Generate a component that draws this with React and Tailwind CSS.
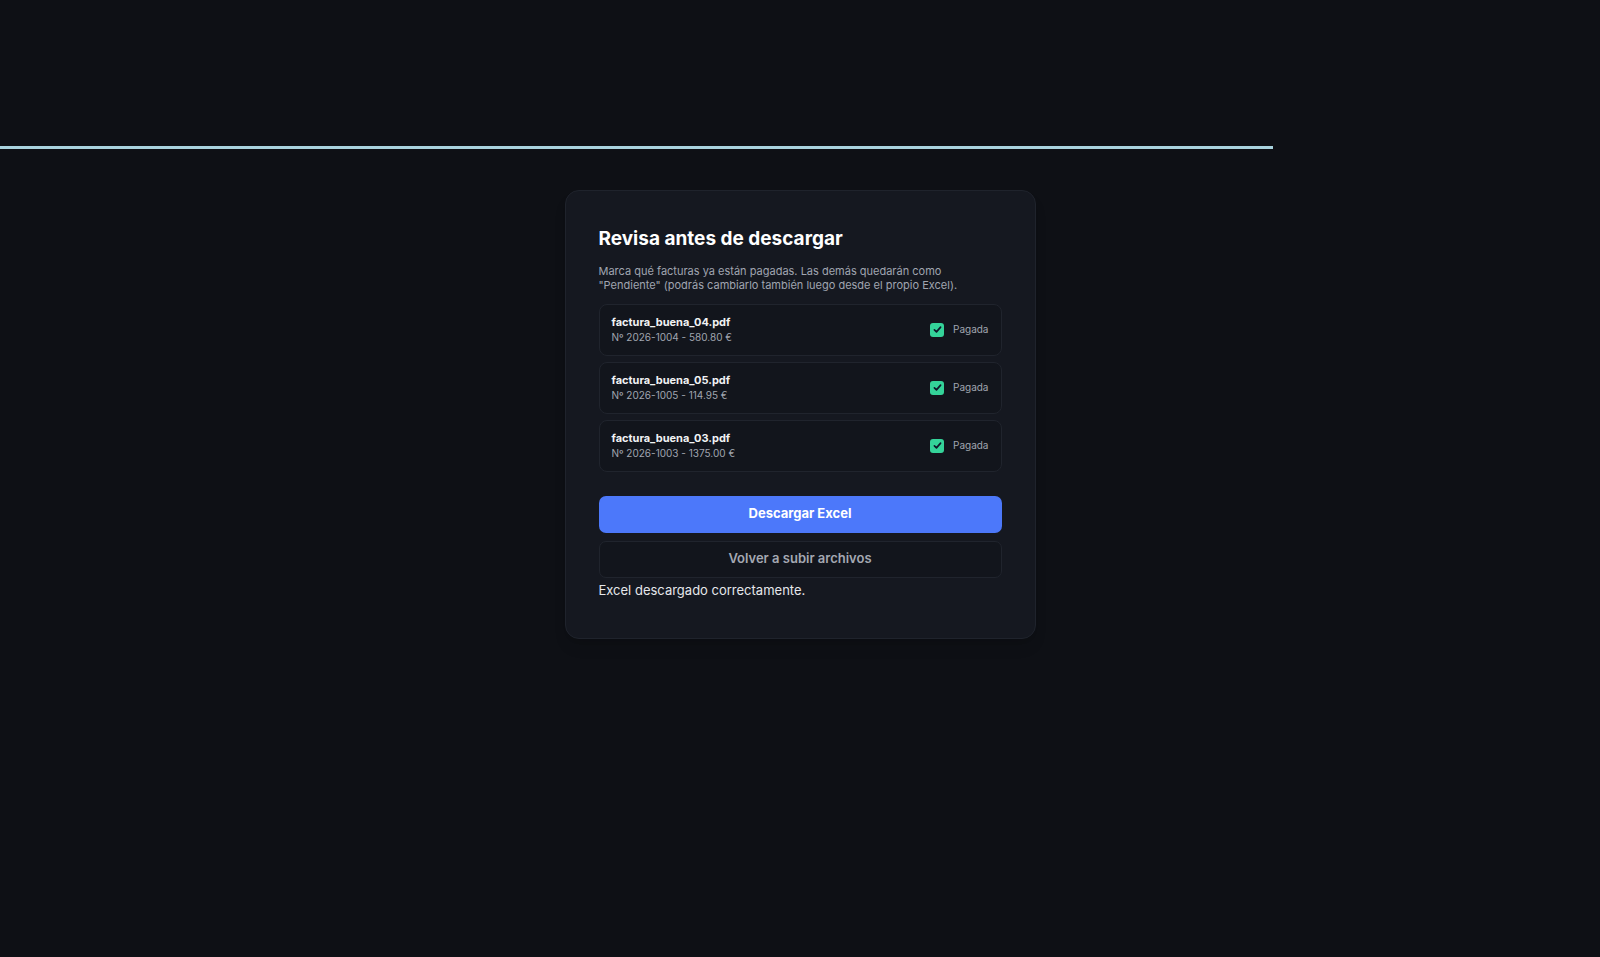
import React from 'react';

const invoices = [
  { name: 'factura_buena_04.pdf', meta: 'Nº 2026-1004 - 580.80 €' },
  { name: 'factura_buena_05.pdf', meta: 'Nº 2026-1005 - 114.95 €' },
  { name: 'factura_buena_03.pdf', meta: 'Nº 2026-1003 - 1375.00 €' },
];

function Check() {
  return (
    <span className="flex h-[14px] w-[14px] items-center justify-center rounded-[3px] bg-[#34d399]">
      <svg viewBox="0 0 16 16" className="h-[11px] w-[11px]" fill="none" stroke="#0f172a" strokeWidth="2.4" strokeLinecap="round" strokeLinejoin="round">
        <path d="M3.5 8.5l3 3 6-7" />
      </svg>
    </span>
  );
}

export default function App() {
  return (
    <div className="min-h-screen bg-[#0e1015] pt-[146px]" style={{ fontFamily: 'Inter, "Noto Sans", sans-serif' }}>
      <div className="h-[3px] w-[1273px] bg-[#a9d3de]" />
      <div className="mt-[41px] flex justify-center">
        <div className="w-[471px] rounded-[14px] border border-[#1f232c] bg-[#151820] px-[33px] pt-[34px] pb-[38px] shadow-lg">
          <h1 className="text-[19px] font-bold text-white">Revisa antes de descargar</h1>
          <p className="mt-[10px] text-[11px] leading-[14px] text-[#a0a5b0]">
            Marca qué facturas ya están pagadas. Las demás quedarán como "Pendiente" (podrás cambiarlo también luego desde el propio Excel).
          </p>
          <div className="mt-[12px] flex flex-col gap-[6px]">
            {invoices.map((inv) => (
              <div key={inv.name} className="flex h-[52px] items-center justify-between rounded-[8px] border border-[#20242d] bg-[#12151c] px-[12px]">
                <div>
                  <div className="text-[11px] font-bold leading-[15px] text-[#f1f2f4]">{inv.name}</div>
                  <div className="text-[10px] leading-[15px] text-[#a0a5b0]">{inv.meta}</div>
                </div>
                <label className="flex items-center gap-[9px] text-[10px] text-[#a0a5b0]">
                  <Check />
                  Pagada
                </label>
              </div>
            ))}
          </div>
          <button className="mt-[24px] h-[37px] w-full rounded-[7px] bg-[#4c78fa] text-[13px] font-bold text-white">Descargar Excel</button>
          <button className="mt-[8px] h-[37px] w-full rounded-[7px] border border-[#20242d] bg-[#12151c] text-[13px] font-semibold text-[#a4a8b2]">Volver a subir archivos</button>
          <p className="mt-[3px] text-[13px] text-[#e5e7eb]">Excel descargado correctamente.</p>
        </div>
      </div>
    </div>
  );
}
